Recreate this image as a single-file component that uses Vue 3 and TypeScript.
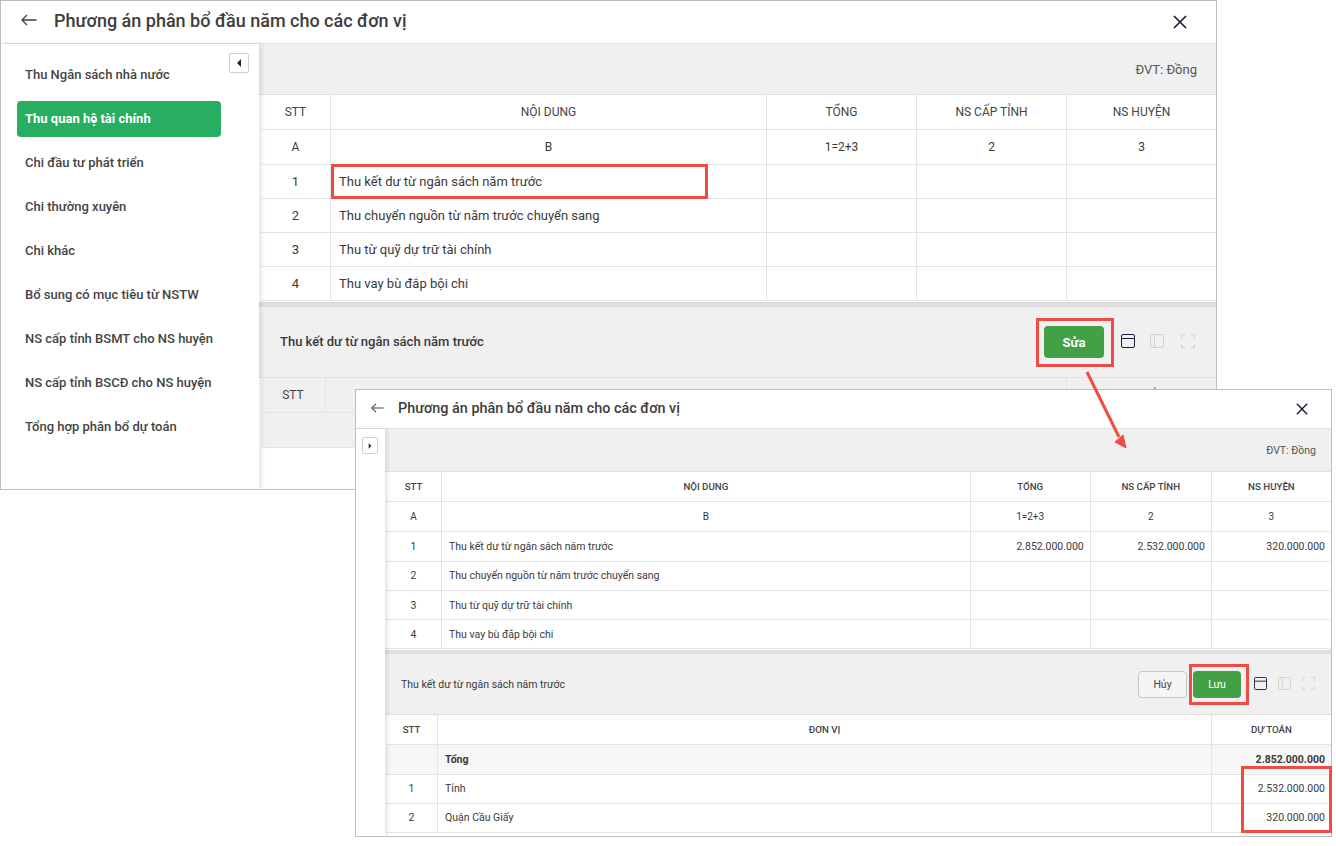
<script setup lang="ts">
interface Cell { text: string; align?: string }
interface Row { h: number; cells: Cell[]; kind?: string }
interface Win {
  key: string
  cls: string
  collapsed: boolean
  cols: number[]
  rows: Row[]
  detailCols: number[]
  detailRows: Row[]
  actions: { label: string; kind: string }[]
}

const c = (text: string, align = 'center'): Cell => ({ text, align })
const name = 'Thu kết dư từ ngân sách năm trước'
const menu = [
  'Thu Ngân sách nhà nước', 'Thu quan hệ tài chính', 'Chi đầu tư phát triển', 'Chi thường xuyên', 'Chi khác',
  'Bổ sung có mục tiêu từ NSTW', 'NS cấp tỉnh BSMT cho NS huyện', 'NS cấp tỉnh BSCĐ cho NS huyện', 'Tổng hợp phân bổ dự toán',
]
const head = ['STT', 'NỘI DUNG', 'TỔNG', 'NS CẤP TỈNH', 'NS HUYỆN'].map((t) => c(t))
const line = (n: string, t: string, a = '', b = '', d = ''): Cell[] => [c(n), c(t, 'left'), c(a, 'right'), c(b, 'right'), c(d, 'right')]
const letters = [c('A'), c('B'), c('1=2+3'), c('2'), c('3')]

const windows: Win[] = [
  {
    key: 'main', cls: 'win-a', collapsed: false,
    cols: [70, 436, 150, 150, 149],
    rows: [
      { h: 35, cells: head, kind: 'thead' },
      { h: 35, cells: letters, kind: 'letters' },
      { h: 34, cells: line('1', name) },
      { h: 34, cells: line('2', 'Thu chuyển nguồn từ năm trước chuyển sang') },
      { h: 34, cells: line('3', 'Thu từ quỹ dự trữ tài chính') },
      { h: 34, cells: line('4', 'Thu vay bù đắp bội chi') },
    ],
    detailCols: [65, 741, 149],
    detailRows: [
      { h: 35, cells: [c('STT'), c(''), c('DỰ TOÁN')], kind: 'thead' },
      { h: 35, cells: [c(''), c(''), c('')], kind: 'blank' },
    ],
    actions: [{ label: 'Sửa', kind: 'save' }],
  },
  {
    key: 'edit', cls: 'win-b', collapsed: true,
    cols: [56, 528, 120, 121, 119],
    rows: [
      { h: 30, cells: head, kind: 'thead' },
      { h: 30, cells: letters, kind: 'letters' },
      { h: 30, cells: line('1', name, '2.852.000.000', '2.532.000.000', '320.000.000') },
      { h: 29, cells: line('2', 'Thu chuyển nguồn từ năm trước chuyển sang'), kind: 'lifted' },
      { h: 29, cells: line('3', 'Thu từ quỹ dự trữ tài chính') },
      { h: 29, cells: line('4', 'Thu vay bù đắp bội chi') },
    ],
    detailCols: [52, 773, 119],
    detailRows: [
      { h: 30, cells: [c('STT'), c('ĐƠN VỊ'), c('DỰ TOÁN')], kind: 'thead' },
      { h: 30, cells: [c(''), c('Tổng', 'left'), c('2.852.000.000', 'right')], kind: 'strong' },
      { h: 29, cells: [c('1'), c('Tỉnh', 'left'), c('2.532.000.000', 'right')], kind: 'lifted' },
      { h: 29, cells: [c('2'), c('Quận Cầu Giấy', 'left'), c('320.000.000', 'right')], kind: 'lifted' },
    ],
    actions: [{ label: 'Hủy', kind: 'cancel' }, { label: 'Lưu', kind: 'save' }],
  },
]

const callouts = [
  { key: 'menu', cls: 'box-menu' },
  { key: 'row', cls: 'box-row' },
  { key: 'edit', cls: 'box-edit' },
  { key: 'save', cls: 'box-save' },
  { key: 'values', cls: 'box-values' },
]
</script>

<template>
  <div class="canvas">
    <section v-for="w in windows" :key="w.key" class="window" :class="w.cls">
      <header class="win-head">
        <svg class="back" viewBox="0 0 16 12" fill="none" stroke="currentColor" stroke-width="1.3">
          <path d="M15.5 6H1M6 1 1 6l5 5" />
        </svg>
        <h1 class="title">Phương án phân bổ đầu năm cho các đơn vị</h1>
        <svg class="close" viewBox="0 0 14 14" fill="none" stroke="currentColor" stroke-width="1.6">
          <path d="M1 1l12 12M13 1 1 13" />
        </svg>
      </header>

      <div class="win-body">
        <aside class="side" :class="{ 'side-min': w.collapsed }">
          <button class="toggle" type="button">
            <svg viewBox="0 0 6 8"><path :d="w.collapsed ? 'M1 0l4 4-4 4z' : 'M5 0 1 4l4 4z'" /></svg>
          </button>
          <nav v-if="!w.collapsed" class="menu">
            <a v-for="(m, i) in menu" :key="m" class="menu-item" :class="{ active: i === 1 }">{{ m }}</a>
          </nav>
        </aside>

        <main class="content">
          <div class="bar unit-bar"><span>ĐVT: Đồng</span></div>
          <table class="grid">
            <colgroup><col v-for="(cw, i) in w.cols" :key="i" :style="{ width: cw + 'px' }" /></colgroup>
            <tbody>
              <tr v-for="(r, ri) in w.rows" :key="ri" :class="r.kind" :style="{ height: r.h + 'px' }">
                <td v-for="(cell, ci) in r.cells" :key="ci" :class="'al-' + cell.align">{{ cell.text }}</td>
              </tr>
            </tbody>
          </table>
          <div class="band"></div>
          <div class="bar detail-bar">
            <span class="detail-name">{{ name }}</span>
            <div class="tools">
              <button v-for="a in w.actions" :key="a.label" type="button" class="btn" :class="'btn-' + a.kind">{{ a.label }}</button>
              <svg class="ico ico-on" viewBox="0 0 14 14" fill="none" stroke="currentColor">
                <rect x=".5" y=".5" width="13" height="13" rx="1.5" /><path d="M.5 4.5h13" />
              </svg>
              <svg class="ico ico-off" viewBox="0 0 14 14" fill="none" stroke="currentColor">
                <rect x=".5" y=".5" width="13" height="13" rx="1" /><path d="M4.5 .5v13" />
              </svg>
              <svg class="ico ico-off" viewBox="0 0 14 14" fill="none" stroke="currentColor">
                <path d="M.5 4V.5H4M10 .5h3.5V4M13.5 10v3.5H10M4 13.5H.5V10" />
              </svg>
            </div>
          </div>
          <table class="grid detail-grid">
            <colgroup><col v-for="(cw, i) in w.detailCols" :key="i" :style="{ width: cw + 'px' }" /></colgroup>
            <tbody>
              <tr v-for="(r, ri) in w.detailRows" :key="ri" :class="r.kind" :style="{ height: r.h + 'px' }">
                <td v-for="(cell, ci) in r.cells" :key="ci" :class="'al-' + cell.align">{{ cell.text }}</td>
              </tr>
            </tbody>
          </table>
        </main>
      </div>
    </section>

    <div v-for="b in callouts" :key="b.key" class="callout" :class="b.cls"></div>
    <svg class="pointer" viewBox="0 0 50 84" fill="none">
      <path d="M3 3 35 68" stroke="#ef4c46" stroke-width="3" />
      <path d="M31 73 39 66 42 79z" fill="#ef4c46" stroke="#ef4c46" stroke-width="1" />
    </svg>
  </div>
</template>

<style>
html, body { margin: 0; background: #fff; overflow: hidden; }
</style>

<style scoped>
.canvas {
  position: relative;
  width: 1336px;
  height: 846px;
  overflow: hidden;
  background: #fff;
  font-family: Roboto, "Liberation Sans", sans-serif;
  color: #333;
}

.window {
  position: absolute;
  box-sizing: border-box;
  display: flex;
  flex-direction: column;
  background: #fff;
  border: 1px solid #bdbdbd;
  overflow: hidden;
}
.win-a {
  left: 0; top: 0; width: 1217px; height: 490px;
  --fs: 13px; --title: 18px; --head-fs: 12px; --head-h: 43px; --unit-h: 51px; --detail-h: 71px;
  --band-top: 1px; --band-h: 5px; --pad: 8px; --table-left: 2px;
  --side-w: 258px; --ico: 14px; --ico-gap: 16px;
}
.win-b {
  left: 355px; top: 389px; width: 977px; height: 448px;
  --fs: 10.5px; --title: 14.4px; --head-fs: 9.7px; --head-h: 39px; --unit-h: 43px; --detail-h: 61px;
  --band-top: 1px; --band-h: 4px; --pad: 7px; --table-left: 1px;
  --side-w: 29px; --ico: 13px; --ico-gap: 11px;
}

.win-head {
  box-sizing: border-box;
  flex: none;
  height: var(--head-h);
  display: flex;
  align-items: center;
  border-bottom: 1px solid #e2e2e2;
  padding-right: 29px;
}
.win-a .win-head { padding-left: 20px; }
.win-b .win-head { padding-left: 15px; padding-right: 23px; }
.back { flex: none; width: 16px; height: 12px; margin-bottom: 4px; color: #3a4252; }
.win-b .back { width: 13px; height: 10px; margin-bottom: 2px; }
.title { flex: 1; margin: 0 0 4px 17px; font-size: var(--title); font-weight: 500; color: #3d3d3d; white-space: nowrap; }
.win-b .title { margin: 0 0 2px 14px; }
.close { flex: none; width: 14px; height: 14px; color: #111a33; }
.win-b .close { width: 12px; height: 12px; }

.win-body { flex: 1; display: flex; min-height: 0; }

.side {
  position: relative;
  z-index: 1;
  flex: none;
  box-sizing: border-box;
  width: var(--side-w);
  background: #fff;
  box-shadow: 2px 0 5px rgba(0, 0, 0, .12);
}
.toggle {
  position: absolute;
  top: 9px;
  right: 10px;
  box-sizing: border-box;
  width: 20px;
  height: 20px;
  padding: 0;
  display: flex;
  align-items: center;
  justify-content: center;
  background: #fff;
  border: 1px solid #cfcfcf;
  border-radius: 2px;
}
.toggle svg { width: 6px; height: 8px; fill: #1c2333; }
.side-min .toggle { top: 8px; right: 7px; width: 16px; height: 17px; }
.side-min .toggle svg { width: 4px; height: 6px; }

.menu { display: flex; flex-direction: column; padding: 8px 38px 0 16px; }
.menu-item {
  box-sizing: border-box;
  height: 44px;
  display: flex;
  align-items: center;
  padding-left: 8px;
  font-size: 13px;
  font-weight: 500;
  color: #444;
  white-space: nowrap;
}
.menu-item.active {
  height: 36px;
  margin: 5px 0 3px;
  padding-bottom: 2px;
  color: #fff;
  font-weight: 700;
  background: #27ae60;
  border-radius: 4px;
}

.content { flex: 1; min-width: 0; display: flex; flex-direction: column; font-size: var(--fs); }
.bar {
  box-sizing: border-box;
  flex: none;
  display: flex;
  align-items: center;
  background: #f0f0f0;
  border-bottom: 1px solid #e0e0e0;
}
.unit-bar { height: var(--unit-h); justify-content: flex-end; padding-right: 19px; color: #555; }
.win-b .unit-bar { padding-right: 15px; }

.grid {
  table-layout: fixed;
  width: calc(100% - var(--table-left));
  margin-left: var(--table-left);
  border-collapse: separate;
  border-spacing: 0;
  flex: none;
}
.grid td {
  box-sizing: border-box;
  padding: 0 var(--pad);
  border-bottom: 1px solid #e4e4e4;
  border-right: 1px solid #e4e4e4;
  white-space: nowrap;
  overflow: hidden;
  color: #3a3a3a;
}
.grid td:last-child { border-right: 0; }
.grid .thead td { color: #444; font-size: var(--head-fs); }
.grid .letters td { font-size: var(--head-fs); }
.win-a .thead td, .win-a .letters td { padding-bottom: 1px; }
.win-b .thead td { font-weight: 500; }
.win-b .letters td { font-size: 10px; }
.win-b .lifted td { padding-bottom: 2px; }
.al-center { text-align: center; }
.al-left { text-align: left; }
.al-right { text-align: right; }
.win-b .al-right { padding-right: 6px; }
.strong td { font-weight: 700; }
.grid .blank td { border-right: 0; }

.band { flex: none; height: var(--band-h); margin-top: var(--band-top); background: #dedede; }
.detail-bar { height: var(--detail-h); padding-left: 21px; }
.win-b .detail-bar { padding-left: 16px; }
.detail-name { flex: 1; font-weight: 500; color: #3a3a3a; white-space: nowrap; margin-bottom: 2px; }
.win-b .detail-name { font-weight: 400; margin-bottom: 0; }
.tools { display: flex; align-items: center; }
.win-a .tools { padding-right: 21px; }
.win-b .tools { padding-right: 16px; }
.btn {
  box-sizing: border-box;
  font: inherit;
  padding: 0;
  border-radius: 4px;
  white-space: nowrap;
}
.win-a .btn { width: 60px; height: 32px; margin-right: 17px; font-weight: 700; }
.win-b .btn { width: 48px; height: 27px; margin-right: 13px; }
.win-b .btn-cancel { width: 49px; margin-right: 6px; }
.btn-save { color: #fff; background: #43a047; border: 0; }
.btn-cancel { color: #444; background: #f5f5f5; border: 1px solid #c4c4c4; }
.ico { flex: none; width: var(--ico); height: var(--ico); margin-right: var(--ico-gap); margin-bottom: 2px; }
.ico:last-child { margin-right: 0; }
.ico-on { color: #15203b; }
.ico-off { color: #cfcfcf; }
.win-a .ico-on { margin-right: 15px; }
.win-a .ico-off:not(:last-child) { margin-right: 17px; }

.detail-grid tr { background: #f0f0f0; }
.win-b .detail-grid tr { background: #fff; }
.win-b .detail-grid tr.strong { background: #f7f7f7; }

.callout { position: absolute; box-sizing: border-box; border: 3px solid #ef4c46; }
.box-menu { left: 9px; top: 94px; width: 232px; height: 52px; }
.box-row { left: 331px; top: 164px; width: 377px; height: 35px; }
.box-edit { left: 1036px; top: 318px; width: 78px; height: 49px; }
.box-save { left: 1189px; top: 664px; width: 60px; height: 41px; }
.box-values { left: 1241px; top: 766px; width: 91px; height: 67px; }
.pointer { position: absolute; left: 1084px; top: 369px; width: 50px; height: 84px; }
</style>
